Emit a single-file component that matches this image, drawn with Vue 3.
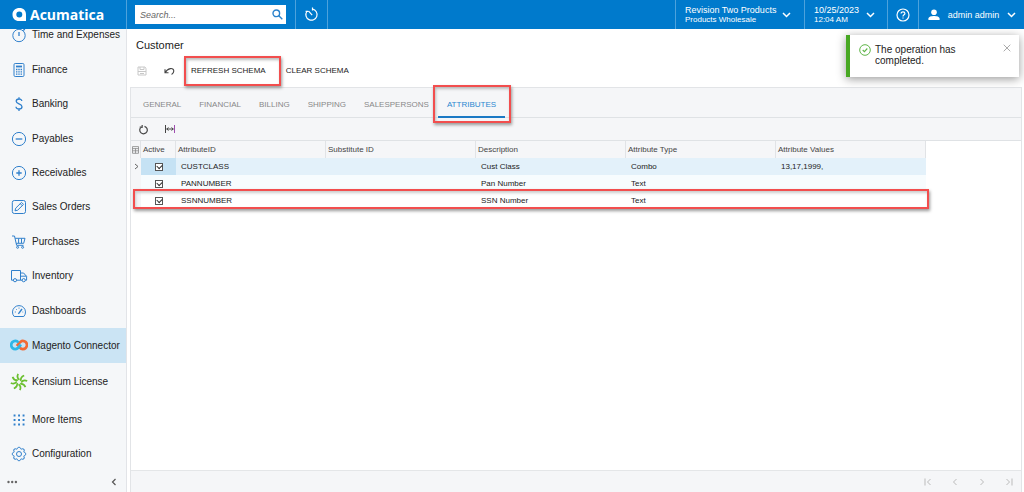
<script setup>
import { ref } from 'vue'

const search = ref('')
const mainItems = [
  { label: 'Time and Expenses', icon: 'timer' },
  { label: 'Finance', icon: 'calc' },
  { label: 'Banking', icon: 'dollar' },
  { label: 'Payables', icon: 'minus' },
  { label: 'Receivables', icon: 'plus' },
  { label: 'Sales Orders', icon: 'edit' },
  { label: 'Purchases', icon: 'cart' },
  { label: 'Inventory', icon: 'truck' },
  { label: 'Dashboards', icon: 'gauge' }
]
const tabs = ['GENERAL', 'FINANCIAL', 'BILLING', 'SHIPPING', 'SALESPERSONS', 'ATTRIBUTES']
const rows = ref([
  { active: true, id: 'CUSTCLASS', sub: '', desc: 'Cust Class', type: 'Combo', values: '13,17,1999,' },
  { active: true, id: 'PANNUMBER', sub: '', desc: 'Pan Number', type: 'Text', values: '' },
  { active: true, id: 'SSNNUMBER', sub: '', desc: 'SSN Number', type: 'Text', values: '' }
])
const spokes = [0, 45, 90, 135, 180, 225, 270, 315]
</script>

<template>
  <div class="app">
    <header class="topbar">
      <a href="#" class="brand">
        <svg width="15" height="14" viewBox="0 0 15 14"><path fill="#fff" fill-rule="evenodd" d="M7.500 0C11.500 0 14 2.600 14 6.500V13H7C3 13 .5 10.500 .5 6.500S3.500 0 7.500 0ZM7.300 3.400A3 3 0 1 0 7.300 9.400A3 3 0 1 0 7.300 3.400Z" /></svg>
        <span>Acumatica</span>
      </a>
      <div class="search-cell">
        <label class="search">
          <input v-model="search" type="text" placeholder="Search..." aria-label="Search">
          <svg width="11" height="11" viewBox="0 0 11 11" fill="none" stroke="#2a82cc" stroke-width="1.400"><circle cx="4.300" cy="4.300" r="3.300" /><path d="M6.600 6.600L10.300 10.300" /></svg>
        </label>
      </div>
      <button class="cell timer" aria-label="Recent">
        <svg width="15" height="15" viewBox="0 0 15 15" fill="none" stroke="#fff" stroke-width="1.200"><path d="M8.500 2.100A5.600 5.600 0 1 1 2.800 4.500" /><path d="M8.200 8.200L4.600 4.200M1.600 4.300H4.300M8.500 .6V3.600" /></svg>
      </button>
      <button class="cell company">
        <span class="stack"><span>Revision Two Products</span><small>Products Wholesale</small></span>
        <svg class="chev" width="9" height="6" viewBox="0 0 9 6"><path d="M1 1L4.500 4.500L8 1" /></svg>
      </button>
      <button class="cell date">
        <span class="stack"><span>10/25/2023</span><small>12:04 AM</small></span>
        <svg class="chev" width="9" height="6" viewBox="0 0 9 6"><path d="M1 1L4.500 4.500L8 1" /></svg>
      </button>
      <button class="cell help" aria-label="Help">
        <svg width="14" height="14" viewBox="0 0 14 14" fill="none" stroke="#fff" stroke-width="1.200"><circle cx="7" cy="7" r="6" /><path d="M5.100 5.500C5.100 3.200 8.900 3.200 8.900 5.500C8.900 6.900 7 6.800 7 8.400M7 9.400V10.600" /></svg>
      </button>
      <button class="cell user">
        <svg width="12" height="12" viewBox="0 0 12 12" fill="#fff"><circle cx="6" cy="3.200" r="2.800" /><path d="M.4 11V9.500C.4 7.800 3.500 7 6 7S11.600 7.800 11.600 9.500V11Z" /></svg>
        <span>admin admin</span>
        <svg class="chev" width="9" height="6" viewBox="0 0 9 6"><path d="M1 1L4.500 4.500L8 1" /></svg>
      </button>
    </header>

    <div class="body">
      <nav class="sidebar">
        <div class="modules">
          <a v-for="item in mainItems" :key="item.label" href="#" class="nav-item">
            <svg class="nav-icon" viewBox="0 0 18 16">
              <g v-if="item.icon === 'timer'"><circle cx="9" cy="8.500" r="6.200" /><path d="M9 5V9M13.300 3.500L14.800 2" stroke-width="1.300" /></g>
              <g v-else-if="item.icon === 'calc'"><rect x="4" y="1.500" width="10" height="13" rx="1.200" /><path d="M6 4.500H12" stroke-width="1.800" /><path d="M6 7.500H12M6 9.800H12M6 12.100H12" stroke-dasharray="1.400 .9" stroke-width="1.300" /></g>
              <g v-else-if="item.icon === 'dollar'"><path stroke-width="1.300" d="M11.800 5C11.800 2.300 6.200 2.300 6.200 5.200C6.200 8.200 12 7.500 12 10.700C12 13.700 6 13.700 6 10.800M9 1.200V3M9 13V14.900" /></g>
              <g v-else-if="item.icon === 'minus'"><circle cx="9" cy="8" r="6.600" /><path d="M5.700 8H12.300" stroke-width="1.300" /></g>
              <g v-else-if="item.icon === 'plus'"><circle cx="9" cy="8" r="6.600" /><path d="M6.300 8H11.700M9 5.300V10.700" stroke-width="1.300" /></g>
              <g v-else-if="item.icon === 'edit'"><rect x="2.300" y="1.500" width="13.200" height="13" rx="2" /><path d="M5 11.800L5.700 9.200L11.500 3.400L13.500 5.400L7.700 11.200ZM10.300 4.700L12.300 6.700" /></g>
              <g v-else-if="item.icon === 'cart'"><path d="M2 2H4.500L6.600 11.300H13.500M5.100 4.300H15L13.700 9.300H6.200M8.600 4.500V9M11.500 4.500V9" /><circle cx="7.600" cy="13.300" r="1" /><circle cx="12.600" cy="13.300" r="1" /></g>
              <g v-else-if="item.icon === 'truck'"><path d="M3.500 12.200H1.500V2.500H10.500V12.200H6.500M10.500 5H13.600L16.600 8.400V12.200H15.300M10.500 8.200H16.500M12.200 12.200H10.500" /><circle cx="5" cy="12.200" r="1.600" /><circle cx="13.700" cy="12.200" r="1.600" /></g>
              <g v-else><path d="M4.200 13.500A6.500 6.500 0 1 1 13.800 13.500Z" /><path d="M8.400 10.800L12 6" stroke-width="1.400" /><path d="M4.800 9H5.800M6 6L6.700 6.700M9 4.600V5.600M12.500 9H13.200" /></g>
            </svg>
            <span>{{ item.label }}</span>
          </a>
        </div>
        <a href="#" class="nav-item current">
          <svg class="nav-logo" viewBox="0 0 20 18" fill="none" stroke-width="3"><path stroke="#f26a35" d="M10.600 10.200C11.700 11.700 12.700 12.500 14.200 12.500A4.400 4.400 0 1 0 14.200 3.200C11.300 3.200 9.500 6.500 7.700 9" /><path stroke="#2fb7e8" d="M9.400 5.100C8.500 3.800 7.500 3.200 6 3.200A4.400 4.400 0 1 0 6 12.500C9 12.500 10.400 9.500 12.100 7.300" /></svg>
          <span>Magento Connector</span>
        </a>
        <a href="#" class="nav-item tall">
          <svg class="nav-logo" viewBox="0 0 18 18" fill="none" stroke="#6abf2e" stroke-width="1.700"><path v-for="a in spokes" :key="a" d="M9.500 6.800C7.600 5.500 7 3.200 8.100 .8" :transform="`rotate(${a} 9 9)`" /></svg>
          <span>Kensium License</span>
        </a>
        <a href="#" class="nav-item tall">
          <svg class="nav-icon" viewBox="0 0 18 16"><path stroke-width="1.900" stroke-dasharray="1.900 2.600" d="M3.600 3.500H15M3.600 8H15M3.600 12.500H15" /></svg>
          <span>More Items</span>
        </a>
        <a href="#" class="nav-item short">
          <svg class="nav-icon" viewBox="0 0 18 16"><circle cx="9" cy="8" r="2.500" /><path v-for="a in spokes" :key="a" d="M6.900 3C7.800 2.800 7.600 1.400 8.200 1.400H9.800C10.400 1.400 10.200 2.800 11.100 3" :transform="`rotate(${a} 9 8)`" /></svg>
          <span>Configuration</span>
        </a>
        <div class="side-foot">
          <button aria-label="More"><svg width="11" height="4" viewBox="0 0 11 4" fill="#666"><circle cx="1.500" cy="2" r="1.200" /><circle cx="5.200" cy="2" r="1.200" /><circle cx="8.900" cy="2" r="1.200" /></svg></button>
          <button aria-label="Collapse"><svg width="6" height="8" viewBox="0 0 6 8" fill="none" stroke="#555" stroke-width="1.200"><path d="M4.500 1L1.500 4L4.500 7" /></svg></button>
        </div>
      </nav>

      <main class="content">
        <h1>Customer</h1>
        <div class="actions">
          <button class="icon-btn" aria-label="Save" disabled><svg width="10" height="10" viewBox="0 0 10 10" fill="none" stroke="#c8c8c8"><path d="M1 1H7.800L9 2.200V9H1ZM3 1V3.500H7V1M1 5.500H9M3 7.500H7" /></svg></button>
          <button class="icon-btn" aria-label="Undo"><svg width="11" height="10" viewBox="0 0 11 10" fill="none" stroke="#444" stroke-width="1.100"><path d="M1 3.300V6.800H4.500M1.200 6.600C3.500 2 9.800 1 9.800 5.100C9.800 6.700 8.900 7.700 7.600 8.400" /></svg></button>
          <button class="text-btn marked">REFRESH SCHEMA</button>
          <button class="text-btn">CLEAR SCHEMA</button>
        </div>

        <section class="panel">
          <div class="tabs" role="tablist">
            <button v-for="t in tabs" :key="t" role="tab" :aria-selected="t === 'ATTRIBUTES'" :class="{ selected: t === 'ATTRIBUTES', marked: t === 'ATTRIBUTES' }">{{ t }}</button>
          </div>
          <div class="grid-tools">
            <button aria-label="Refresh"><svg width="11" height="11" viewBox="0 0 11 11" fill="none" stroke="#444" stroke-width="1.200"><path d="M3.300 2.900A3.800 3.800 0 1 0 6.500 2.300M4.200 .9L4.100 3.400L1.700 3.200" /></svg></button>
            <button aria-label="Fit columns"><svg width="12" height="10" viewBox="0 0 12 10" fill="none" stroke="#444"><path d="M1.500 1V9M2.500 5H9.500M4.500 3.500L2.800 5L4.500 6.500M7.500 3.500L9.200 5L7.500 6.500" /><path stroke="#a04cb0" d="M10.500 1V9" /></svg></button>
          </div>
          <div class="grid-area">
            <table>
              <colgroup><col class="c-sel"><col class="c-act"><col span="5" class="c-data"></colgroup>
              <thead>
                <tr>
                  <th class="sel"><svg width="7" height="8" viewBox="0 0 7 8" fill="none" stroke="#888" stroke-width=".8"><path d="M.5 .6H6.500V7.300H.5ZM.5 2.600H6.500M.5 4.800H6.500M3.500 2.400V7.300" /></svg></th>
                  <th>Active</th><th>AttributeID</th><th>Substitute ID</th><th>Description</th><th>Attribute Type</th><th>Attribute Values</th>
                </tr>
              </thead>
              <tbody>
                <tr v-for="(r, i) in rows" :key="r.id" :class="{ focus: i === 0, alt: i === 1, boxed: i === 2 }">
                  <td class="sel"><svg v-if="i === 0" width="5" height="7" viewBox="0 0 5 7" fill="none" stroke="#666"><path d="M1 1L4 3.500L1 6" /></svg></td>
                  <td class="tick"><input v-model="r.active" type="checkbox" :aria-label="`${r.id} active`"></td>
                  <td>{{ r.id }}</td><td>{{ r.sub }}</td><td>{{ r.desc }}</td><td>{{ r.type }}</td>
                  <td>{{ r.values }}<span v-if="i === 2" class="row-mark"></span></td>
                </tr>
              </tbody>
            </table>
          </div>
          <footer class="pager">
            <button aria-label="First page"><svg width="8" height="8" viewBox="0 0 8 8"><path d="M1 .5V7.500M6.500 1L3.500 4L6.500 7" /></svg></button>
            <button aria-label="Previous page"><svg width="8" height="8" viewBox="0 0 8 8"><path d="M5.500 1L2.500 4L5.500 7" /></svg></button>
            <button aria-label="Next page"><svg width="8" height="8" viewBox="0 0 8 8"><path d="M2.500 1L5.500 4L2.500 7" /></svg></button>
            <button aria-label="Last page"><svg width="8" height="8" viewBox="0 0 8 8"><path d="M7 .5V7.500M1.500 1L4.500 4L1.500 7" /></svg></button>
          </footer>
        </section>
      </main>
    </div>

    <div class="toast" role="status">
      <svg width="12" height="12" viewBox="0 0 12 12" fill="none" stroke="#5fb548"><circle cx="6" cy="6" r="5.300" /><path d="M3.700 6L5.400 7.600L8.300 4.500" stroke-width="1.100" /></svg>
      <p>The operation has completed.</p>
      <button aria-label="Close"><svg width="8" height="8" viewBox="0 0 8 8" fill="none" stroke="#aaa"><path d="M.7 .7L7.300 7.300M7.300 .7L.7 7.300" /></svg></button>
    </div>
  </div>
</template>

<style>
html, body { margin: 0; }
</style>

<style scoped>
.app { position: relative; display: flex; flex-direction: column; height: 100vh; overflow: hidden; background: #fff; color: #222; font: 9px/12px "Liberation Sans", Arial, sans-serif; }
.app * { box-sizing: border-box; }
a { color: inherit; text-decoration: none; }
button { padding: 0; border: 0; background: none; color: inherit; font: inherit; cursor: pointer; }
svg { display: block; flex: none; }

.topbar { display: flex; flex: none; height: 29px; background: #007acc; color: #fff; }
.brand { display: flex; align-items: center; gap: 3px; width: 126px; padding-left: 12px; font: 700 14px/28px "Open Sans", "Noto Sans", sans-serif; }
.search-cell { display: flex; align-items: center; width: 169px; padding: 0 9px 0 8px; border-left: 1px solid #4da2dc; }
.search { display: flex; align-items: center; flex: 1; height: 19px; padding: 0 3px 0 5px; background: #fff; }
.search input { flex: 1; min-width: 0; padding: 0; border: 0; outline: 0; background: none; color: #333; font: italic 9px/12px "Liberation Sans", Arial, sans-serif; }
.search input::placeholder { color: #666; }
.cell { display: flex; align-items: center; border-left: 1px solid #4da2dc; text-align: left; }
.timer { justify-content: center; width: 33px; border-right: 1px solid #4da2dc; }
.company { justify-content: space-between; width: 129px; margin-left: auto; padding: 0 13px 0 9px; }
.date { justify-content: space-between; width: 83px; padding: 0 12px 0 9px; }
.help { justify-content: center; width: 31px; }
.user { justify-content: space-between; width: 106px; padding: 0 8px 0 9px; }
.stack { display: flex; flex-direction: column; line-height: 10px; }
.stack small { font-size: 8px; }
.chev { fill: none; stroke: #fff; stroke-width: 1.5; }

.body { display: flex; flex: 1; min-height: 0; }
.sidebar { display: flex; flex-direction: column; flex: none; width: 127px; overflow: hidden; border-right: 1px solid #e2e4e8; background: #f5f7f9; }
.modules { display: grid; grid-auto-rows: 1fr; flex: none; height: 310px; margin-top: -11px; }
.nav-item { display: flex; flex: none; align-items: center; gap: 4px; padding-left: 10px; font-size: 10px; line-height: 14px; white-space: nowrap; }
.nav-icon { width: 18px; height: 16px; fill: none; stroke: #3080cc; stroke-width: 1; }
.nav-logo { width: 18px; height: 18px; }
.current { height: 35px; background: #cbe4f4; }
.tall { height: 38px; }
.short { height: 30px; }
.side-foot { display: flex; align-items: center; justify-content: space-between; flex: 1; padding: 3px 9px 0 7px; }

.content { display: flex; flex: 1; flex-direction: column; min-width: 0; padding: 0 2px 0 3px; }
h1 { margin: 9px 0 0 6px; font-size: 11px; font-weight: 400; line-height: 14px; }
.actions { display: flex; align-items: center; height: 22px; margin: 8px 0 5px 7px; }
.icon-btn { display: flex; align-items: center; width: 27px; }
.text-btn { position: relative; height: 22px; margin-right: 20px; font-size: 8px; }
.marked { position: relative; }
.marked::after { position: absolute; inset: -4px -15px -4px -7px; border: 2px solid #f24e4e; box-shadow: 1px 2px 3px #999, inset 1px 2px 3px #bbb; content: ""; pointer-events: none; }

.panel { display: flex; flex: 1; flex-direction: column; min-height: 0; border: 1px solid #e2e4e7; border-bottom: 0; }
.tabs { display: flex; flex: none; height: 30px; padding-left: 3px; border-bottom: 1px solid #dfe2e5; background: #f5f6f8; color: #888; font-size: 8px; }
.tabs button { height: 30px; padding: 6px 9px 0; border-bottom: 2px solid transparent; }
.tabs .selected { border-color: #1b79c4; color: #2a87d0; }
.tabs .marked::after { inset: -3px -6px -7px -5px; }
.grid-tools { display: flex; align-items: center; flex: none; gap: 15px; height: 22px; padding-left: 7px; background: #f5f6f8; }
.grid-area { flex: 1; min-height: 0; border-top: 1px solid #dfe2e5; }
table { border-collapse: separate; border-spacing: 0; table-layout: fixed; width: 795px; font-size: 8px; line-height: 10px; }
.c-sel { width: 10px; }
.c-act { width: 35px; }
.c-data { width: 150px; }
th { height: 17px; padding: 0 2px; border-right: 1px solid #e1e3e6; background: #f5f6f8; color: #444; font-weight: 400; text-align: left; }
td { height: 17px; padding: 1px 5px 0; }
th.sel, td.sel { padding: 0 1px; background: #f5f6f8; }
.sel svg { margin: auto; }
.focus td { background: #e3f1fa; }
.focus .tick { background: #c5e2f4; }
.focus .sel { background: #f5f6f8; }
.alt td:not(.sel) { background: #f7fcfe; }
.tick input { position: relative; display: block; width: 8px; height: 8px; margin: 0 auto; border: 1px solid #555; background: #fff; appearance: none; }
.tick input:checked::after { position: absolute; top: 0; left: 1px; width: 4px; height: 3px; border: solid #333; border-width: 0 0 1px 1px; transform: rotate(-45deg); content: ""; }
.boxed { position: relative; }
.row-mark { position: absolute; inset: -3px -3px 0 2px; border: 2px solid #f24e4e; box-shadow: 1px 2px 3px #999, inset 1px 2px 3px #ccc; pointer-events: none; }
.pager { display: flex; align-items: center; justify-content: flex-end; flex: none; gap: 19px; height: 22px; padding-right: 8px; border-top: 1px solid #e4e6e8; background: #f5f6f8; }
.pager svg { fill: none; stroke: #bbb; stroke-width: 1; }

.toast { position: absolute; top: 35px; right: 5px; display: flex; align-items: flex-start; gap: 4px; width: 173px; height: 42px; padding: 9px 8px 0 9px; border-left: 4px solid #48a823; background: #fff; box-shadow: 0 2px 9px #999; }
.toast p { flex: 1; max-width: 90px; margin: 0; font-size: 10px; line-height: 11px; }
.toast button { margin-left: auto; }
</style>
